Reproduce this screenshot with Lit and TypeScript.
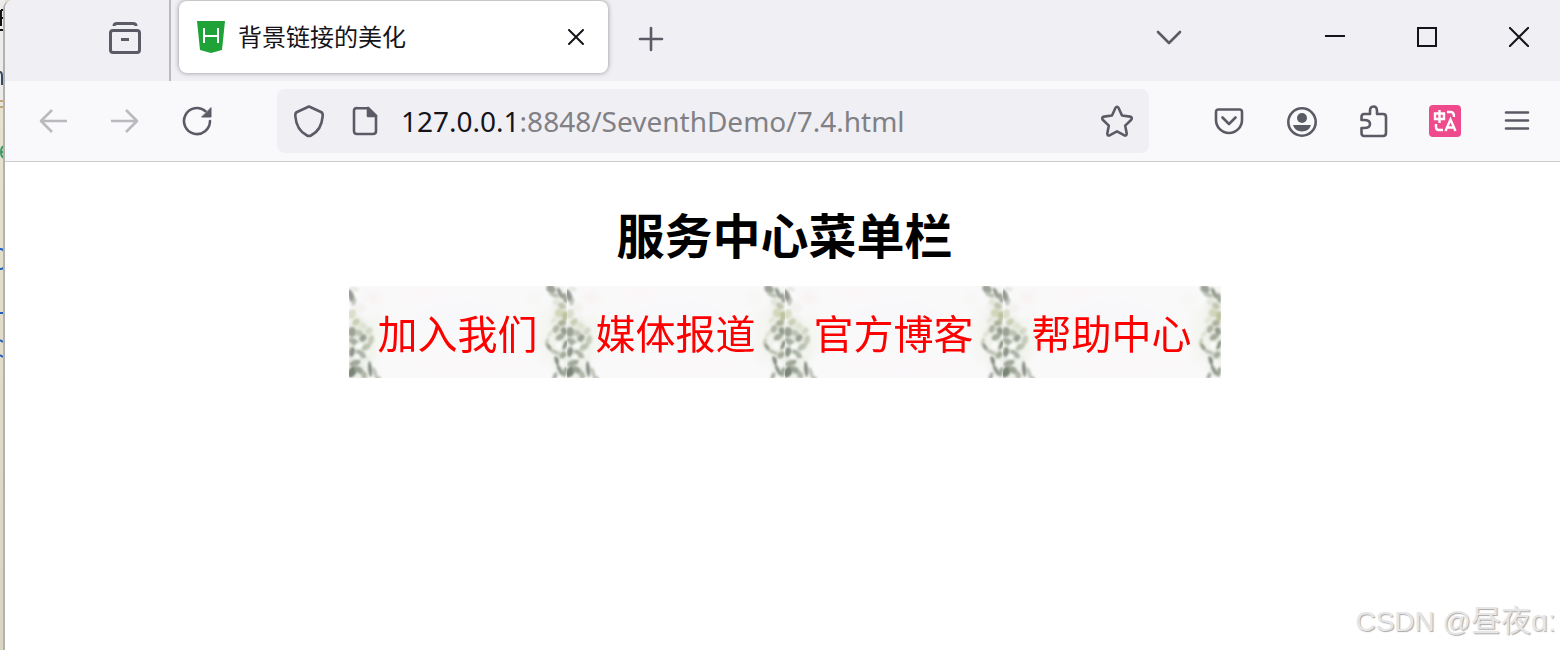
import { LitElement, html, svg, css } from "lit";
import { customElement, property } from "lit/decorators.js";

/* Leaves of the floral pattern: x, y, rx, ry, rotation, colour. */
type Leaf = [number, number, number, number, number, string];

const LEAVES: Leaf[] = [
  [2, 10, 3, 7, -20, "#84887f"],
  [5, 16, 2, 4, 20, "#b9bdb4"],
  [6, 3, 4, 2, 20, "#e3e5dd"],
  [11, 22, 6, 5, 0, "#f3f1ee"],
  [3, 28, 4, 5, 20, "#d4d9c2"],
  [7, 36, 4, 3, -40, "#c3c9a8"],
  [14, 40, 4, 3, 30, "#dde0cf"],
  [3, 46, 4, 5, 0, "#8e9686"],
  [10, 47, 4, 3, 20, "#b8beab"],
  [20, 45, 4, 3, -50, "#cfd3c3"],
  [14, 52, 4, 3, -50, "#8b9385"],
  [22, 54, 3, 5, 15, "#bdc4b0"],
  [5, 56, 6, 3, 35, "#9ca393"],
  [10, 60, 4, 3, 0, "#fbfcfa"],
  [17, 61, 5, 3, -30, "#b1baa8"],
  [3, 66, 3, 5, 10, "#7d867a"],
  [12, 68, 6, 3, 40, "#a3aa9c"],
  [20, 67, 3, 3, 0, "#f4f6f0"],
  [8, 71, 3, 3, 0, "#fafbf9"],
  [6, 77, 6, 3, -20, "#949c8d"],
  [3, 86, 4, 6, 30, "#657060"],
  [10, 84, 5, 3, 35, "#8c9586"],
  [16, 77, 4, 4, -20, "#f1f3ef"],
  [21, 83, 2, 8, -6, "#747c70"],
  [15, 89, 3, 4, -20, "#a6ad9d"],
  [26, 87, 2, 6, -18, "#b5bbae"],
  [29, 92, 3, 2, 0, "#b3b9aa"],
  [202, 3, 5, 4, 30, "#8e9488"],
  [205, 9, 5, 2, 20, "#b2b8ab"],
  [211, 7, 2, 6, -25, "#82897d"],
  [216, 12, 2, 5, -10, "#8f968a"],
  [207, 16, 3, 3, 0, "#dfe3d7"],
  [213, 20, 4, 3, 35, "#b9bfa6"],
  [210, 27, 4, 4, 10, "#cdd2b2"],
  [216, 30, 3, 5, 0, "#b5bb92"],
  [205, 34, 4, 2, -40, "#e0e3d3"],
  [213, 37, 4, 3, -20, "#a0a78e"],
  [207, 43, 3, 4, 30, "#a5ac9c"],
  [215, 45, 3, 4, -20, "#858e7f"],
  [201, 48, 4, 2, -50, "#dbe0ce"],
  [198, 56, 2, 4, 10, "#c4cab8"],
  [204, 54, 4, 4, 20, "#f0f2eb"],
  [211, 51, 5, 3, -30, "#979f90"],
  [200, 61, 2, 4, -30, "#888f80"],
  [206, 66, 5, 2, 25, "#b5bbad"],
  [210, 60, 4, 4, 0, "#fbfcf9"],
  [216, 59, 2, 5, 25, "#7b8475"],
  [214, 69, 4, 3, -40, "#9ba392"],
  [208, 75, 2, 5, -20, "#737c6f"],
  [213, 78, 3, 4, 0, "#f8f9f6"],
  [211, 84, 2, 6, -25, "#7d8779"],
  [216, 86, 2, 5, 10, "#8e9789"],
  [206, 90, 2, 4, 20, "#9ba393"],
];

const BLUSH: Leaf[] = [
  [24, 12, 8, 6, 20, "#f8f1ef"],
  [75, 8, 20, 8, 0, "#fbf7f8"],
  [110, 30, 44, 16, 0, "#f8f8fb"],
  [186, 12, 7, 7, 0, "#f7f6f3"],
  [120, 78, 60, 10, 0, "#faf8f9"],
  [27, 50, 8, 24, 0, "#f4f6f0"],
  [195, 50, 8, 30, 0, "#f5f6f2"],
  [9, 62, 12, 32, 0, "#e6eae1"],
  [212, 46, 8, 44, 0, "#e7eae0"],
];

const leaf = ([x, y, rx, ry, r, c]: Leaf) =>
  svg`<ellipse cx=${x} cy=${y} rx=${rx} ry=${ry} fill=${c} transform="rotate(${r} ${x} ${y})"></ellipse>`;

@customElement("menu-link")
class MenuLink extends LitElement {
  @property() label = "";

  static styles = css`
    :host { display: block; }
    .link {
      display: grid;
      place-items: center;
      height: 92px;
      color: #f00;
      font: 40px/92px "Noto Sans CJK SC", sans-serif;
      text-decoration: none;
      white-space: nowrap;
      overflow: hidden;
    }
    .link > * { grid-area: 1 / 1; }
    .flowers { width: 100%; height: 100%; display: block; }
    .text { padding: 0 29px; }
  `;

  render() {
    return html`<a class="link" href="#">
      <svg class="flowers" viewBox="0 0 218 92" preserveAspectRatio="none" aria-hidden="true">
        <defs>
          <filter id="wash" x="-50%" y="-50%" width="200%" height="200%"><feGaussianBlur stdDeviation="4"></feGaussianBlur></filter>
          <filter id="soft"><feGaussianBlur stdDeviation="1"></feGaussianBlur></filter>
        </defs>
        <rect width="218" height="92" fill="#f9f9fa"></rect>
        <g filter="url(#wash)">${BLUSH.map(leaf)}</g>
        <g filter="url(#soft)" opacity="0.85">${LEAVES.map(leaf)}</g>
      </svg>
      <span class="text">${this.label}</span>
    </a>`;
  }
}

@customElement("app-root")
class AppRoot extends LitElement {
  static styles = css`
    :host {
      display: flex;
      min-height: 100vh;
      overflow: hidden;
      position: relative;
      background: #e4e0cf;
      font-family: "Noto Sans", "Noto Sans CJK SC", sans-serif;
    }
    * { box-sizing: border-box; }
    button {
      border: 0;
      padding: 0;
      background: none;
      color: #5b5b66;
      display: grid;
      place-items: center;
      flex: none;
    }
    svg { display: block; fill: none; stroke: currentColor; stroke-width: 2.6; stroke-linecap: round; stroke-linejoin: round; }

    .behind {
      width: 5px;
      margin-right: -2px;
      flex: none;
      background: linear-gradient(#eeecea 0 100px, #bfa878 100px 102px, #e8e5de 102px 106px, #bfa878 106px 108px, #e6e2cd 108px, #d8d5c3 650px);
    }
    .behind svg { stroke-width: 2; stroke-linecap: butt; }
    .window {
      flex: 1;
      min-width: 0;
      display: flex;
      flex-direction: column;
      border-left: 2px solid #b4b2ae;
      border-top-left-radius: 9px;
      overflow: hidden;
      background: #fff;
    }

    .tabs {
      height: 81px;
      display: flex;
      align-items: center;
      background: #f0eff4;
      padding-right: 31px;
    }
    .view {
      align-self: stretch;
      padding: 0 8px 5px 84px;
      border-right: 2px solid #bbbabf;
      display: flex;
      align-items: center;
    }
    .view svg { stroke-width: 3; }
    .tool { width: 72px; height: 64px; }
    .tab {
      flex: 0 1 429px;
      height: 72px;
      margin: 0 7px 8px 8px;
      border-radius: 8px;
      background: #fff;
      box-shadow: 0 0 5px rgba(0, 0, 0, 0.4);
      display: flex;
      align-items: center;
      padding: 0 22px 0 18px;
      color: #15141a;
      font-size: 24px;
      line-height: 36px;
      white-space: nowrap;
    }
    .tab-title { flex: 1; margin-left: 13px; }
    .tab .close { color: #15141a; }
    .tab .close svg { stroke-width: 2; }
    .add { margin-bottom: 4px; }
    .list { margin: 0 120px 8px auto; }
    .controls { display: flex; gap: 72px; margin-bottom: 7px; }
    .controls button { color: #15141a; width: 20px; height: 40px; }
    .controls svg { stroke-width: 2; }

    .nav {
      height: 81px;
      display: flex;
      align-items: center;
      padding: 0 7px 0 12px;
      background: #f9f9fb;
      border-bottom: 1px solid #ccc;
    }
    .dim { color: #b9b9be; }
    .address {
      flex: 1;
      min-width: 0;
      height: 64px;
      margin: 0 44px;
      padding: 0 16px;
      border-radius: 8px;
      background: #f0eff4;
      display: flex;
      align-items: center;
      color: #5b5b66;
    }
    .page-icon { margin: 0 23px 0 27px; }
    .url {
      flex: 1;
      min-width: 0;
      color: #808085;
      font-size: 28px;
      line-height: 40px;
      white-space: nowrap;
      overflow: hidden;
    }
    .host { color: #15141a; }

    .page { flex: 1; text-align: center; padding-left: 4px; }
    .title {
      margin: 35px 0 17px;
      font: bold 48px/72px "Noto Sans CJK SC", sans-serif;
      color: #000;
    }
    .menu { display: flex; justify-content: center; }
    .watermark {
      position: absolute;
      right: 4px;
      bottom: 6px;
      font: 28px/44px "Liberation Sans", "Noto Sans CJK SC", sans-serif;
      color: #e6e6e6;
      text-shadow: 1px 1px 1px #aaa;
      white-space: nowrap;
    }
    .author { font-size: 30px; }
  `;

  render() {
    return html`
      <div class="behind" aria-hidden="true">
        <svg width="5" height="400" viewBox="0 0 5 400">
          <path d="M1 10V26M1 10H5M1 18H5M0 30H5" stroke="#111"></path>
          <path d="M0 72Q2 72 2 76V85" stroke="#334a66"></path>
          <path d="M5 146Q1 146 1 152T5 158M1 152H5" stroke="#3a9a6a"></path>
          <path d="M0 249Q4 249 4 252M0 269Q4 269 4 266M0 313H4M0 340L3 342M0 355L3 357" stroke="#1f5fc0"></path>
        </svg>
      </div>
      <div class="window">
        <header class="tabs">
          <div class="view">
            <button class="tool" aria-label="Firefox View">
              <svg width="36" height="36" viewBox="0 0 36 36">
                <path d="M7 6Q7 3.500 10 3.500H26Q29 3.500 29 6" stroke-linecap="butt"></path>
                <rect x="3.500" y="10.500" width="29" height="22" rx="2.500"></rect>
                <path d="M14 19.500H22" stroke-linecap="butt"></path>
              </svg>
            </button>
          </div>
          <div class="tab">
            <svg width="28" height="32" viewBox="0 0 28 32" aria-hidden="true">
              <path d="M0 0H28L25 29L14 32L3 29Z" fill="#1fa338" stroke="none"></path>
              <path d="M7 7V22M21 7V22M7 15H21" stroke="#fff" stroke-width="2" stroke-linecap="butt"></path>
            </svg>
            <span class="tab-title">背景链接的美化</span>
            <button class="close" aria-label="Close tab">
              <svg width="20" height="20" viewBox="0 0 20 20"><path d="M3 3L17 17M17 3L3 17"></path></svg>
            </button>
          </div>
          <button class="tool add" aria-label="New tab">
            <svg width="26" height="26" viewBox="0 0 26 26"><path d="M13 2V24M2 13H24"></path></svg>
          </button>
          <button class="tool list" aria-label="List all tabs">
            <svg width="26" height="16" viewBox="0 0 26 16"><path d="M2 3L13 14L24 3"></path></svg>
          </button>
          <div class="controls">
            <button aria-label="Minimize"><svg width="20" height="20" viewBox="0 0 20 20"><path d="M0 9H20" stroke-linecap="butt"></path></svg></button>
            <button aria-label="Maximize"><svg width="20" height="20" viewBox="0 0 20 20"><path d="M1 1H19V19H1Z" stroke-linejoin="miter"></path></svg></button>
            <button aria-label="Close"><svg width="20" height="20" viewBox="0 0 20 20"><path d="M0 0L20 20M20 0L0 20"></path></svg></button>
          </div>
        </header>

        <nav class="nav">
          <button class="tool dim" aria-label="Back">
            <svg width="30" height="26" viewBox="0 0 30 26"><path d="M14 2L3 13L14 24M3 13H29" stroke-linecap="butt"></path></svg>
          </button>
          <button class="tool dim" aria-label="Forward">
            <svg width="30" height="26" viewBox="0 0 30 26"><path d="M16 2L27 13L16 24M27 13H1" stroke-linecap="butt"></path></svg>
          </button>
          <button class="tool" aria-label="Reload">
            <svg width="30" height="30" viewBox="0 0 30 30">
              <path d="M28 15A13 13 0 1 1 23.500 5.200"></path>
              <path d="M29 2V11H20Z" fill="currentColor" stroke-width="1"></path>
            </svg>
          </button>
          <div class="address">
            <svg width="32" height="34" viewBox="0 0 32 34"><path d="M16 2.500L28 8Q30 9 29.700 12C29 21 25 28 18 31.500Q16 32.500 14 31.500C7 28 3 21 2.300 12Q2 9 4 8Z"></path></svg>
            <svg class="page-icon" width="26" height="30" viewBox="0 0 26 30">
              <path d="M4 2.300H16L24 10V25Q24 28 21 28H5Q2 28 2 25V5Q2 2 5 2"></path>
              <path d="M16 2V10H24Z" fill="currentColor"></path>
            </svg>
            <div class="url"><span class="host">127.0.0.1</span>:8848/SeventhDemo/7.4.html</div>
            <button aria-label="Bookmark this page">
              <svg width="32" height="32" viewBox="0 0 32 32"><path d="M14.300 3.200Q16 .3 17.700 3.200L21 10.500L29 11.600Q32 12.500 30 15L24.200 20.600L25.700 28.500Q25.700 31.300 23 30.200L16 26.400L9 30.200Q6.300 31.300 6.300 28.500L7.800 20.600L2 15Q0 12.500 3 11.600L11 10.500Z"></path></svg>
            </button>
          </div>
          <button class="tool" aria-label="Save to Pocket">
            <svg width="30" height="28" viewBox="0 0 30 28"><path d="M4.500 2.500H25.500Q28 2.500 28 5V13A13 13 0 0 1 2 13V5Q2 2.500 4.500 2.500ZM8.500 10.500L15 17L21.500 10.500"></path></svg>
          </button>
          <button class="tool" aria-label="Account">
            <svg width="32" height="32" viewBox="0 0 32 32">
              <circle cx="17" cy="17" r="13.700"></circle>
              <circle cx="17" cy="13" r="5" fill="currentColor" stroke="none"></circle>
              <path d="M8 20H26Q24 26.500 17 26.500T8 20Z" fill="currentColor" stroke="none"></path>
            </svg>
          </button>
          <button class="tool" aria-label="Extensions">
            <svg width="30" height="34" viewBox="0 0 30 34"><path d="M12 10V7Q12 2.500 15.500 2.500T19 7V10H25Q28 10 28 13V29Q28 32 25 32H6Q3.500 32 3.500 29V24H6Q12 24 12 20T6 16H3.500V13Q3.500 10 6 10Z"></path></svg>
          </button>
          <button class="tool" aria-label="Translate">
            <svg width="32" height="32" viewBox="0 0 32 32">
              <rect width="32" height="32" rx="4" fill="#ef4a8b" stroke="none"></rect>
              <g stroke="#fff" stroke-width="2.400" stroke-linecap="butt" stroke-linejoin="miter">
                <path d="M6 8.500H15V14H6ZM10.500 5V18M18 7H22Q25 7 25 12M7 19V22Q7 25 10 25H14"></path>
                <path d="M16.500 26L21.500 14.500L26.500 26M18 22.500H25"></path>
              </g>
            </svg>
          </button>
          <button class="tool" aria-label="Menu">
            <svg width="26" height="22" viewBox="0 0 26 22"><path d="M2 2.500H24M2 10.500H24M2 18.500H24"></path></svg>
          </button>
        </nav>

        <main class="page">
          <h1 class="title">服务中心菜单栏</h1>
          <div class="menu">
            ${["加入我们", "媒体报道", "官方博客", "帮助中心"].map((t) => html`<menu-link .label=${t}></menu-link>`)}
          </div>
        </main>
      </div>
      <div class="watermark">CSDN @<span class="author">昼夜ɑː</span></div>
    `;
  }
}
